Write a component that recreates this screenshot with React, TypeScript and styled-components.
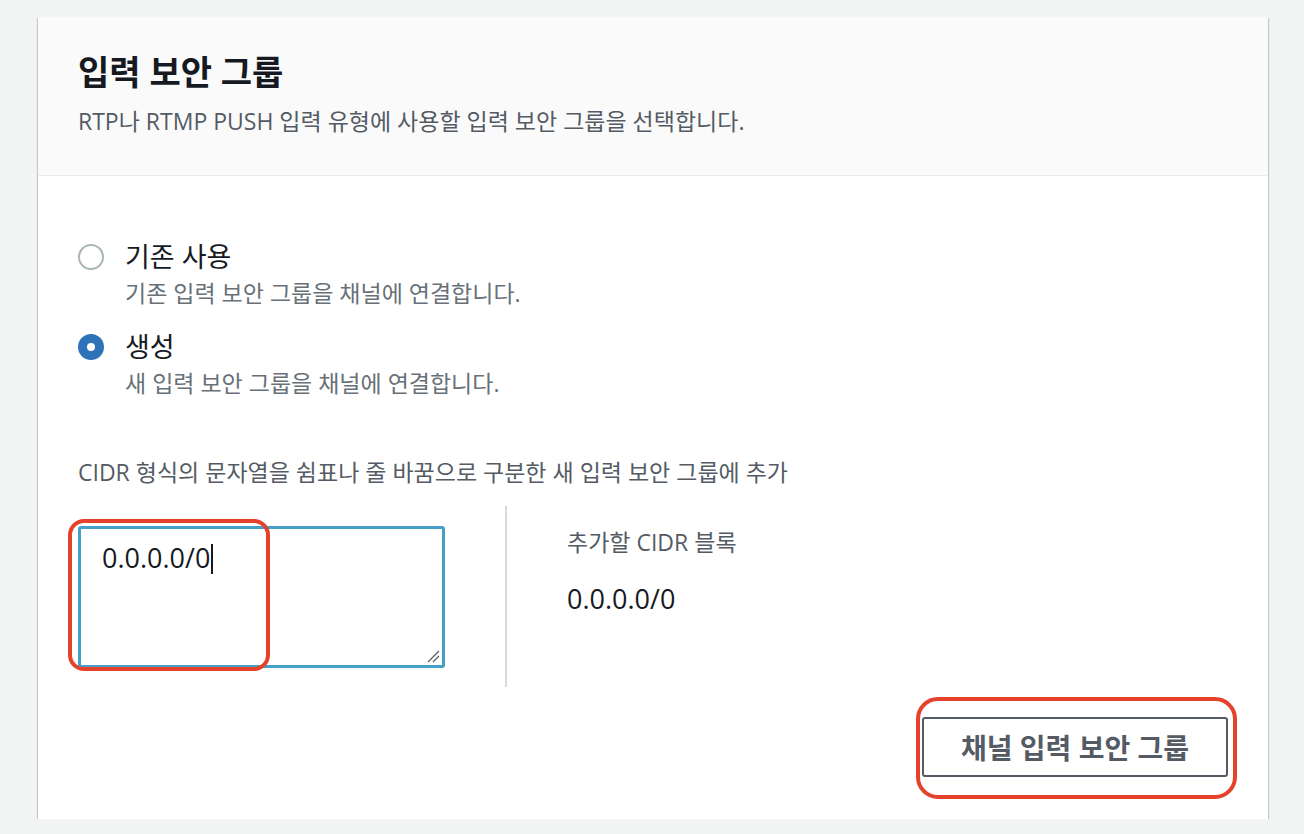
import * as React from "react";
import styled, { createGlobalStyle } from "styled-components";

const GlobalStyle = createGlobalStyle`
  body {
    margin: 0;
    background: #f2f3f3;
    font-family: "Open Sans", "Noto Sans CJK KR", sans-serif;
    color: #16191f;
  }
`;

const Card = styled.section`
  width: 1230px;
  margin: 17px 0 0 38px;
  background: #ffffff;
  box-shadow: 0 1px 1px 0 rgba(0, 28, 36, 0.3), 1px 1px 1px 0 rgba(0, 28, 36, 0.15),
    -1px 1px 1px 0 rgba(0, 28, 36, 0.15);
`;

const Header = styled.header`
  background: #fafafa;
  border-bottom: 1px solid #eaeded;
  padding: 37px 40px 40px;
`;

const Title = styled.h2`
  margin: 0;
  font-size: 34px;
  line-height: 36px;
  font-weight: 700;
  color: #16191f;
`;

const Subtitle = styled.p`
  margin: 17px 0 0;
  font-size: 23px;
  line-height: 28px;
  color: #545b64;
`;

const Body = styled.div`
  padding: 66px 40px 42px;
`;

const RadioGroup = styled.div`
  display: flex;
  flex-direction: column;
  gap: 25px;
`;

const RadioRow = styled.label`
  display: grid;
  grid-template-columns: 26px 1fr;
  column-gap: 21px;
  row-gap: 7px;
  align-items: center;
`;

const RadioCircle = styled.span<{ checked?: boolean }>`
  box-sizing: border-box;
  width: 26px;
  height: 26px;
  border-radius: 50%;
  background: #ffffff;
  border: ${(p) => (p.checked ? "9px solid #2e73b8" : "2px solid #aab7b8")};
`;

const RadioLabel = styled.span`
  font-size: 27px;
  line-height: 30px;
  color: #16191f;
`;

const RadioDescription = styled.span`
  grid-column: 2;
  font-size: 23px;
  line-height: 28px;
  color: #687078;
`;

const FieldLabel = styled.p`
  margin: 61px 0 0;
  font-size: 23px;
  line-height: 28px;
  color: #545b64;
`;

const Columns = styled.div`
  display: flex;
  margin-top: 20px;
  height: 181px;
`;

const InputColumn = styled.div`
  display: flex;
  align-items: center;
  padding-right: 60px;
  border-right: 2px solid #d5dbdb;
`;

const AnnotatedBox = styled.div`
  position: relative;
`;

const Annotation = styled.span<{ radius: number }>`
  position: absolute;
  box-sizing: border-box;
  border: 4px solid #e5422b;
  border-radius: ${(p) => p.radius}px;
  pointer-events: none;
`;

const CidrInput = styled.div`
  position: relative;
  box-sizing: border-box;
  width: 367px;
  height: 142px;
  border: 3px solid #44a0c8;
  border-radius: 3px;
  background: #ffffff;
  padding: 14px 21px;
  font-size: 27px;
  line-height: 30px;
  color: #16191f;
`;

const Caret = styled.span`
  display: inline-block;
  width: 1.5px;
  height: 30px;
  margin-left: 1px;
  vertical-align: -6px;
  background: #16191f;
`;

const ResizeHandle = styled.svg`
  position: absolute;
  right: 2px;
  bottom: 2px;
`;

const PreviewColumn = styled.div`
  padding: 22px 0 0 60px;
`;

const PreviewLabel = styled.p`
  margin: 0;
  font-size: 23px;
  line-height: 28px;
  color: #545b64;
`;

const PreviewValue = styled.p`
  margin: 28px 0 0;
  font-size: 27px;
  line-height: 30px;
  color: #16191f;
`;

const Actions = styled.div`
  display: flex;
  justify-content: flex-end;
  margin-top: 30px;
`;

const Button = styled.button`
  box-sizing: border-box;
  width: 306px;
  height: 60px;
  border: 2px solid #545b64;
  border-radius: 3px;
  background: #ffffff;
  color: #545b64;
  font-family: inherit;
  font-size: 28px;
  font-weight: 700;
  cursor: pointer;
`;

const App = () => {
  const cidrs = ["0.0.0.0/0"];

  return (
    <>
      <GlobalStyle />
      <Card>
        <Header>
          <Title>입력 보안 그룹</Title>
          <Subtitle>RTP나 RTMP PUSH 입력 유형에 사용할 입력 보안 그룹을 선택합니다.</Subtitle>
        </Header>
        <Body>
          <RadioGroup>
            <RadioRow>
              <RadioCircle />
              <RadioLabel>기존 사용</RadioLabel>
              <RadioDescription>기존 입력 보안 그룹을 채널에 연결합니다.</RadioDescription>
            </RadioRow>
            <RadioRow>
              <RadioCircle checked />
              <RadioLabel>생성</RadioLabel>
              <RadioDescription>새 입력 보안 그룹을 채널에 연결합니다.</RadioDescription>
            </RadioRow>
          </RadioGroup>

          <FieldLabel>CIDR 형식의 문자열을 쉼표나 줄 바꿈으로 구분한 새 입력 보안 그룹에 추가</FieldLabel>

          <Columns>
            <InputColumn>
              <AnnotatedBox>
                <CidrInput>
                  {cidrs.join("\n")}
                  <Caret />
                  <ResizeHandle width="14" height="14" viewBox="0 0 14 14">
                    <path d="M2 13 L13 2 M7 13 L13 7" stroke="#545b64" strokeWidth="1.2" fill="none" />
                  </ResizeHandle>
                </CidrInput>
                <Annotation radius={16} style={{ left: -10, top: -7, width: 202, height: 152 }} />
              </AnnotatedBox>
            </InputColumn>
            <PreviewColumn>
              <PreviewLabel>추가할 CIDR 블록</PreviewLabel>
              {cidrs.map((c) => (
                <PreviewValue key={c}>{c}</PreviewValue>
              ))}
            </PreviewColumn>
          </Columns>

          <Actions>
            <AnnotatedBox>
              <Button>채널 입력 보안 그룹</Button>
              <Annotation radius={22} style={{ left: -6, top: -20, width: 321, height: 102 }} />
            </AnnotatedBox>
          </Actions>
        </Body>
      </Card>
    </>
  );
};

export default App;
